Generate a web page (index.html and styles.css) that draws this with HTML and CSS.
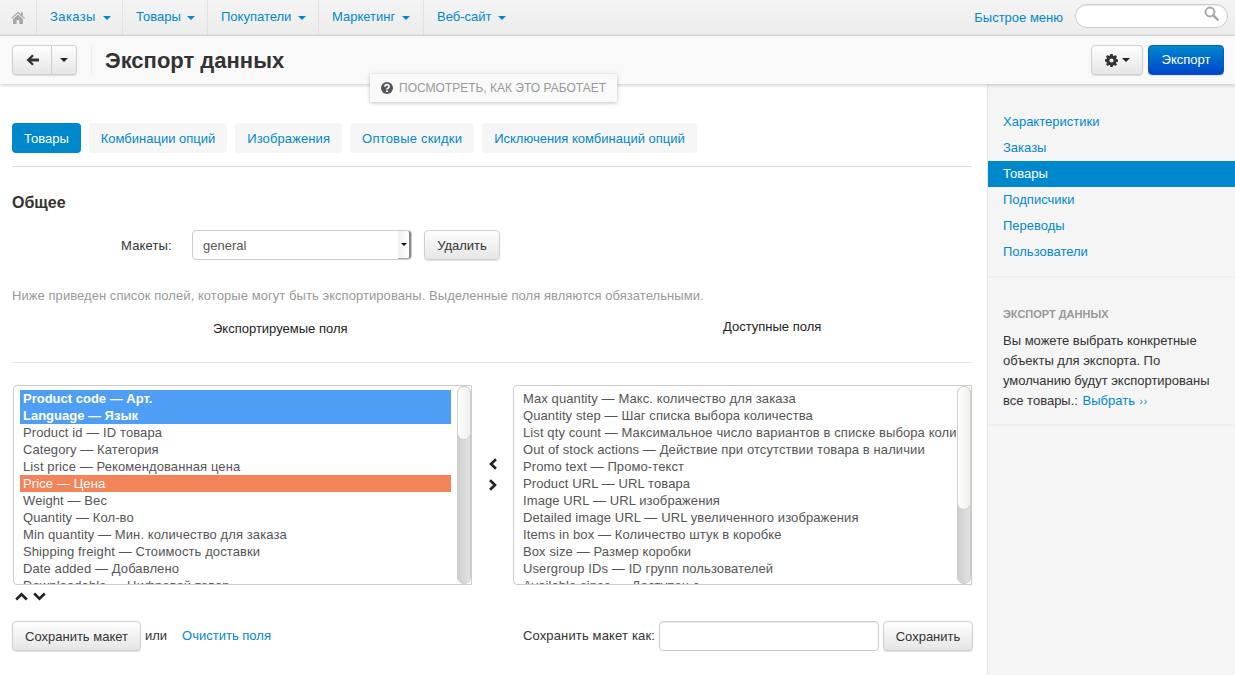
FILE: index.html
```html
<!DOCTYPE html>
<html>
<head>
<meta charset="utf-8">
<title>Экспорт данных</title>
<link rel="stylesheet" href="styles.css">
</head>
<body>
<div class="topbar">
	<a class="top-home"><svg width="14" height="13" viewBox="0 0 14 13"><path fill="#a6a6a6" d="M7 .8 0 6.9l.8.9L7 2.5l6.2 5.3.8-.9-2.2-1.9V1.2h-1.9v2.1zM2 8.1V13h3.6V9.2h2.8V13H12V8.1L7 3.8z"/></svg></a>
	<a class="top-item orders">Заказы <i class="caret blue"></i></a>
	<a class="top-item goods">Товары <i class="caret blue"></i></a>
	<a class="top-item buyers">Покупатели <i class="caret blue"></i></a>
	<a class="top-item marketing">Маркетинг <i class="caret blue"></i></a>
	<a class="top-item last">Веб-сайт <i class="caret blue"></i></a>
	<a class="quick">Быстрое меню</a>
	<div class="search"><svg width="15" height="15" viewBox="0 0 15 15"><circle cx="6" cy="6" r="4.4" fill="none" stroke="#a8a8a8" stroke-width="2"/><path d="M9.3 9.3 13.6 13.6" stroke="#a8a8a8" stroke-width="2.6" stroke-linecap="round"/></svg></div>
</div>

<div class="subnav">
	<div class="btn-group">
		<a class="btn back"><svg width="13" height="12" viewBox="0 0 13 12"><path fill="#333" d="M6.2.4 7.9 2 5.2 4.6H13v2.8H5.2L7.9 10l-1.7 1.6L.5 6z"/></svg></a>
		<a class="btn drop"><i class="caret"></i></a>
	</div>
	<h1 class="title">Экспорт данных</h1>
	<a class="btn gear"><svg width="13" height="13" viewBox="0 0 13 13"><path fill="#333" fill-rule="evenodd" d="M5.3 0h2.4l.3 1.7 1 .4L10.400 1.100l1.600 1.600-1 1.400.4 1 1.600.3v2.400l-1.600.3-.4 1 1 1.400-1.600 1.600-1.400-1-1 .4-.3 1.700H5.300L5 11.300l-1-.4-1.400 1L1 10.300l1-1.400-.4-1L0 7.600V5.200l1.600-.3.4-1-1-1.400 1.600-1.600 1.400 1 1-.4zM6.500 4.400a2.100 2.100 0 1 0 0 4.200 2.100 2.100 0 0 0 0-4.200z"/></svg><i class="caret"></i></a>
	<a class="btn primary">Экспорт</a>
</div>

<div class="howto"><svg width="12" height="12" viewBox="0 0 12 12"><circle cx="6" cy="6" r="6" fill="#555"/><path fill="none" stroke="#f9f9f9" stroke-width="1.700" d="M3.900 4.700c0-2.700 4.200-2.700 4.200-.2 0 1.500-2.100 1.500-2.100 3"/><rect x="5.100" y="8.300" width="1.800" height="1.700" fill="#f9f9f9"/></svg>Посмотреть, как это работает</div>

<div class="layout">
	<div class="main">
		<div class="tabs">
			<a class="tab active">Товары</a>
			<a class="tab">Комбинации опций</a>
			<a class="tab images">Изображения</a>
			<a class="tab wholesale">Оптовые скидки</a>
			<a class="tab">Исключения комбинаций опций</a>
		</div>

		<h2 class="section">Общее</h2>

		<div class="layouts-row">
			<span class="layouts-label">Макеты:</span>
			<div class="select">general<span class="select-arrow"><i class="caret small"></i></span></div>
			<a class="btn text remove">Удалить</a>
		</div>

		<p class="hint">Ниже приведен список полей, которые могут быть экспортированы. Выделенные поля являются обязательными.</p>

		<div class="columns-head">
			<div class="col-export">Экспортируемые поля</div>
			<div class="col-avail">Доступные поля</div>
		</div>

		<div class="lists">
			<div class="list left">
				<div class="rows">
					<div class="row required">Product code — Арт.</div>
					<div class="row required">Language — Язык</div>
					<div class="row">Product id — ID товара</div>
					<div class="row">Category — Категория</div>
					<div class="row">List price — Рекомендованная цена</div>
					<div class="row picked">Price — Цена</div>
					<div class="row">Weight — Вес</div>
					<div class="row">Quantity — Кол-во</div>
					<div class="row">Min quantity — Мин. количество для заказа</div>
					<div class="row">Shipping freight — Стоимость доставки</div>
					<div class="row">Date added — Добавлено</div>
					<div class="row">Downloadable — Цифровой товар</div>
				</div>
				<div class="track"><div class="thumb short"></div></div>
			</div>
			<div class="move">
				<svg width="10" height="12" viewBox="0 0 10 12"><path fill="none" stroke="#222" stroke-width="2.600" d="M8 1.200 3 6l5 4.800"/></svg>
				<svg width="10" height="12" viewBox="0 0 10 12"><path fill="none" stroke="#222" stroke-width="2.600" d="M2 1.200 7 6l-5 4.800"/></svg>
			</div>
			<div class="list right">
				<div class="rows">
					<div class="row">Max quantity — Макс. количество для заказа</div>
					<div class="row">Quantity step — Шаг списка выбора количества</div>
					<div class="row">List qty count — Максимальное число вариантов в списке выбора количества</div>
					<div class="row">Out of stock actions — Действие при отсутствии товара в наличии</div>
					<div class="row">Promo text — Промо-текст</div>
					<div class="row">Product URL — URL товара</div>
					<div class="row">Image URL — URL изображения</div>
					<div class="row">Detailed image URL — URL увеличенного изображения</div>
					<div class="row">Items in box — Количество штук в коробке</div>
					<div class="row">Box size — Размер коробки</div>
					<div class="row">Usergroup IDs — ID групп пользователей</div>
					<div class="row">Available since — Доступен с</div>
				</div>
				<div class="track"><div class="thumb long"></div></div>
			</div>
		</div>

		<div class="sort">
			<svg width="13" height="9" viewBox="0 0 13 9"><path fill="none" stroke="#222" stroke-width="2.600" d="M1.200 7.500 6.500 2.300l5.300 5.200"/></svg>
			<svg width="13" height="9" viewBox="0 0 13 9"><path fill="none" stroke="#222" stroke-width="2.600" d="M1.200 1.500 6.500 6.700l5.300-5.200"/></svg>
		</div>

		<div class="save-row">
			<a class="btn text save-layout">Сохранить макет</a>
			<span class="or">или</span>
			<a class="clear">Очистить поля</a>
			<span class="save-as">Сохранить макет как:</span>
			<div class="input"></div>
			<a class="btn text save">Сохранить</a>
		</div>
	</div>

	<div class="sidebar">
		<div class="side-nav">
			<a class="side-item">Характеристики</a>
			<a class="side-item">Заказы</a>
			<a class="side-item active">Товары</a>
			<a class="side-item">Подписчики</a>
			<a class="side-item">Переводы</a>
			<a class="side-item">Пользователи</a>
		</div>
		<div class="side-box">
			<h4>Экспорт данных</h4>
			<p>Вы можете выбрать конкретные объекты для экспорта. По умолчанию будут экспортированы все товары.: <a class="pick">Выбрать <span class="more">››</span></a></p>
		</div>
	</div>
</div>
</body>
</html>
```
FILE: styles.css
```css
html, body { margin: 0; padding: 0; height: 675px; overflow: hidden; }
body { font: 13px/18px "Liberation Sans", Arial, sans-serif; color: #333; background: #fff; }
a { color: #0088cc; text-decoration: none; }

.caret { display: inline-block; width: 0; height: 0; border: 4px solid transparent; border-top-color: #222; border-bottom: 0; vertical-align: middle; }
.caret.blue { border-top-color: #0088cc; margin-left: 3px; }
.caret.small { border-width: 3px; border-bottom: 0; border-top-color: #111; }

/* top menu */
.topbar { display: flex; align-items: center; height: 35px; background: linear-gradient(#f4f4f4, #ececec); border-bottom: 1px solid #d8d8d8; }
.top-home { display: flex; align-items: center; justify-content: center; width: 37px; height: 35px; border-right: 1px solid #e2e2e2; box-sizing: border-box; }
.top-item { flex: none; box-sizing: border-box; height: 35px; line-height: 33px; padding-left: 13px; border-right: 1px solid #e2e2e2; white-space: nowrap; }
.top-item.orders { width: 86px; letter-spacing: .4px; }
.top-item.goods { width: 85px; }
.top-item.buyers { width: 111px; }
.top-item.marketing { width: 105px; }
.top-item.last { border-right: 0; }
.quick { margin: 1px 12px 0 auto; }
.search { align-self: flex-start; width: 153px; height: 24px; box-sizing: border-box; margin: 4px 7px 0 0; display: flex; align-items: center; justify-content: flex-end; padding: 0 8px 5px 0; background: #fff; border: 1px solid #ccc; border-radius: 12px; box-shadow: inset 0 1px 1px rgba(0,0,0,.08); }

/* buttons */
.btn { display: flex; align-items: center; justify-content: center; box-sizing: border-box; height: 30px; color: #333; background: linear-gradient(#fefefe, #e6e6e6); border: 1px solid #cfcfcf; border-radius: 4px; box-shadow: 0 1px 1px rgba(0,0,0,.12); white-space: nowrap; }
.btn.text { padding-top: 1px; }
.btn.primary { width: 76px; color: #fff; background: linear-gradient(#0088cc, #0044cc); border-color: #0b5bb5; }

/* page title bar */
.subnav { position: relative; z-index: 2; display: flex; align-items: center; box-sizing: border-box; height: 48px; padding: 0 11px 0 12px; background: #f9f9f9; box-shadow: 0 1px 4px rgba(0,0,0,.22); }
.btn-group { display: flex; padding-right: 14px; margin-right: 13px; border-right: 1px solid #efefef; height: 30px; }
.btn.back { width: 40px; border-radius: 4px 0 0 4px; }
.btn.drop { width: 25px; border-left: 0; border-radius: 0 4px 4px 0; }
.title { margin: 2px 0 0; font-size: 22px; line-height: 30px; font-weight: bold; color: #333; }
.btn.gear { margin-left: auto; margin-right: 5px; width: 52px; gap: 4px; }

.howto { position: absolute; z-index: 3; left: 370px; top: 74px; box-sizing: border-box; width: 247px; height: 28px; display: flex; align-items: center; gap: 6px; padding-left: 11px; font-size: 12px; color: #999; text-transform: uppercase; background: #f9f9f9; box-shadow: 0 1px 4px rgba(0,0,0,.25); white-space: nowrap; }

/* layout */
.layout { display: flex; height: 591px; }
.main { width: 987px; box-sizing: border-box; padding: 39px 15px 0 12px; }
.sidebar { flex: 1; background: #f5f5f5; border-left: 1px solid #e6e6e6; padding-top: 25px; }

.tabs { display: flex; gap: 8px; padding-bottom: 13px; border-bottom: 1px solid #ddd; }
.tab { height: 30px; line-height: 31px; padding: 0 12px; background: #f6f6f6; border-radius: 4px; white-space: nowrap; }
.tab.active { color: #fff; background: #0088cc; }
.tab.images { letter-spacing: .1px; }
.tab.wholesale { letter-spacing: .2px; }

.section { margin: 26px 0 0; font-size: 16px; line-height: 20px; font-weight: bold; color: #333; }

.layouts-row { display: flex; align-items: center; margin-top: 17px; }
.layouts-label { width: 71px; margin: 1px 0 0 109px; letter-spacing: .15px; }
.select { position: relative; width: 220px; height: 30px; line-height: 29px; box-sizing: border-box; padding-left: 10px; margin-right: 12px; color: #555; background: #fff; border: 1px solid #ccc; border-radius: 4px; }
.select-arrow { position: absolute; right: 0; top: 0; bottom: 0; width: 13px; display: flex; align-items: center; justify-content: center; background: linear-gradient(90deg, #f0f0f0, #fff); border-right: 2px solid #888; border-bottom: 1px solid #aaa; border-radius: 0 3px 3px 0; box-sizing: border-box; }
.btn.remove { width: 76px; }

.hint { margin: 27px 0 0; font-size: 13px; line-height: 18px; color: #999; letter-spacing: .06px; }

.columns-head { position: relative; height: 57px; border-bottom: 1px solid #e6e6e6; color: #222; }
.col-export { position: absolute; left: 201px; top: 15px; }
.col-avail { position: absolute; left: 711px; top: 13px; }

.lists { display: flex; align-items: center; margin: 22px 0 0 1px; }
.list { display: flex; box-sizing: border-box; width: 459px; height: 200px; background: #fff; border: 1px solid #ccc; border-radius: 4px 0 0 4px; padding: 4px 0 0 6px; overflow: hidden; }
.rows { flex: 1; min-width: 0; overflow: hidden; margin-bottom: -4px; font-size: 13px; line-height: 17px; color: #555; white-space: nowrap; }
.row { padding-left: 3px; letter-spacing: .1px; }
.list.left .rows { margin-right: 6px; }
.row.required { color: #fff; font-weight: bold; background: #4f9ef5; letter-spacing: 0; }
.row.picked { color: #fff; background: #f3845a; }
.track { flex: none; width: 14px; height: 198px; margin-top: -4px; background: linear-gradient(90deg, #cfcfcf, #e2e2e2); border-radius: 7px; border: 1px solid #c9c9c9; box-sizing: border-box; }
.thumb { background: linear-gradient(90deg, #fff, #f0efed); border-radius: 7px; box-shadow: 0 0 0 1px #d4d3d0; }
.thumb.short { height: 52px; }
.thumb.long { height: 122px; }
.move { width: 41px; display: flex; flex-direction: column; align-items: center; gap: 9px; padding-bottom: 21px; }

.sort { display: flex; gap: 5px; height: 9px; margin: 7px 0 0 3px; }

.save-row { display: flex; align-items: center; margin: 20px -1px 0 0; }
.btn.save-layout { width: 129px; }
.or { margin-left: 4px; }
.clear { margin-left: 15px; }
.save-as { margin-left: auto; margin-right: 4px; letter-spacing: .15px; }
.input { box-sizing: border-box; width: 220px; height: 30px; margin-right: 4px; background: #fff; border: 1px solid #ccc; border-radius: 4px; box-shadow: inset 0 1px 1px rgba(0,0,0,.08); }
.btn.save { width: 90px; }

/* sidebar */
.side-nav { padding-bottom: 11px; border-bottom: 2px solid #efefef; }
.side-item { display: block; height: 26px; line-height: 26px; padding-left: 15px; }
.side-item.active { color: #fff; background: #0088cc; }
.side-box { padding: 27px 15px 12px; border-bottom: 2px solid #efefef; }
.side-box h4 { margin: 0; font-size: 11px; line-height: 18px; font-weight: bold; color: #999; text-transform: uppercase; }
.side-box p { margin: 8px 0 0; line-height: 20px; color: #333; }
.pick { margin-left: 1px; }
.more { font-size: 10px; letter-spacing: 1px; margin-left: 1px; }
```
